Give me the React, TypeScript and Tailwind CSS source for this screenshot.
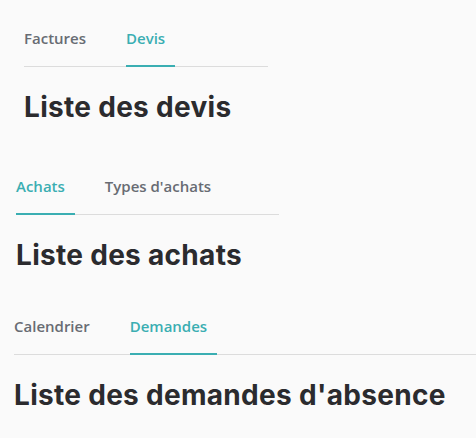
import React from 'react';

interface TabsHeaderProps {
  tabs: string[];
  active: number;
  title: string;
  lineWidth: string;
  className?: string;
}

function TabsHeader({ tabs, active, title, lineWidth, className }: TabsHeaderProps) {
  return (
    <div className={className}>
      <div className={`flex gap-[30px] border-b border-[#dcdcdc] ${lineWidth}`}>
        {tabs.map((tab, i) => (
          <div
            key={tab}
            className={`-mb-px pb-[17px] pr-[10px] border-b-2 text-[15px] leading-5 font-semibold ${
              i === active ? 'border-[#3aaeb2] text-[#3aaeb2]' : 'border-transparent text-[#686c73]'
            }`}
          >
            {tab}
          </div>
        ))}
      </div>
      <h1 className="mt-[22px] text-[28px] leading-9 font-bold text-[#2b2b2e] font-['Inter',sans-serif] tracking-[0.3px]">
        {title}
      </h1>
    </div>
  );
}

export default function App() {
  return (
    <div className="w-[476px] h-[438px] bg-[#fafafa] overflow-hidden font-['Open_Sans',sans-serif]">
      <TabsHeader
        className="ml-[24px] pt-[28px]"
        tabs={['Factures', 'Devis']}
        active={1}
        title="Liste des devis"
        lineWidth="w-[244px]"
      />
      <TabsHeader
        className="ml-[16px] mt-[51px]"
        tabs={['Achats', "Types d'achats"]}
        active={0}
        title="Liste des achats"
        lineWidth="w-[263px]"
      />
      <TabsHeader
        className="ml-[14px] mt-[43px]"
        tabs={['Calendrier', 'Demandes']}
        active={1}
        title="Liste des demandes d'absence"
        lineWidth="w-[462px]"
      />
    </div>
  );
}
